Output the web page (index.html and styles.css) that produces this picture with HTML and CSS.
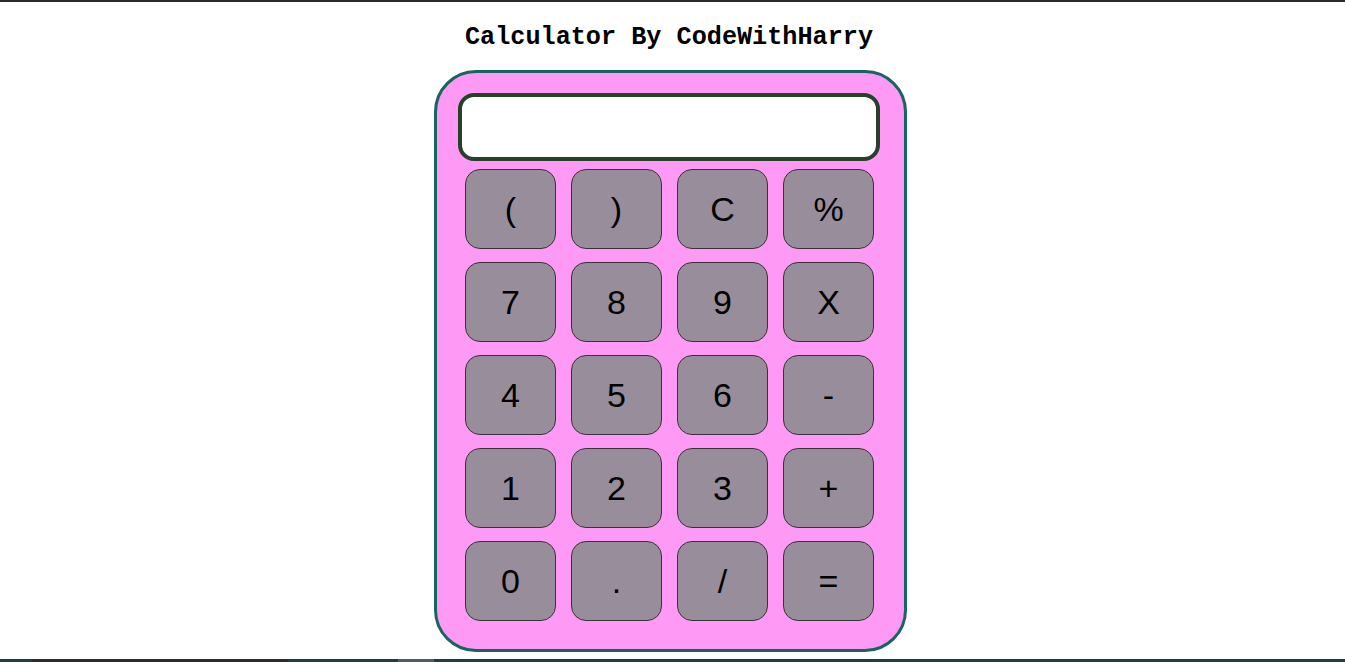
FILE: index.html
```html
<!DOCTYPE html>
<html>
<head>
<meta charset="utf-8">
<title>Calculator</title>
<link rel="stylesheet" href="styles.css">
</head>
<body>
<div class="topbar"></div>
<main class="page">
  <h1 class="title">Calculator By CodeWithHarry</h1>
  <div class="calc">
    <input class="display" type="text">
    <div class="keys">
      <button class="key">(</button>
      <button class="key">)</button>
      <button class="key">C</button>
      <button class="key">%</button>
      <button class="key">7</button>
      <button class="key">8</button>
      <button class="key">9</button>
      <button class="key">X</button>
      <button class="key">4</button>
      <button class="key">5</button>
      <button class="key">6</button>
      <button class="key">-</button>
      <button class="key">1</button>
      <button class="key">2</button>
      <button class="key">3</button>
      <button class="key">+</button>
      <button class="key">0</button>
      <button class="key">.</button>
      <button class="key">/</button>
      <button class="key">=</button>
    </div>
  </div>
</main>
<div class="bottombar">
  <span class="seg seg1"></span>
  <span class="seg seg2"></span>
  <span class="seg seg3"></span>
  <span class="seg seg4"></span>
</div>
</body>
</html>
```
FILE: styles.css
```css
html, body {
  margin: 0;
  padding: 0;
  height: 100%;
  overflow: hidden;
  background: #ffffff;
}
body {
  display: flex;
  flex-direction: column;
}
.topbar {
  height: 2px;
  background: #2b2b2b;
  flex: none;
}
.page {
  flex: 1;
  display: flex;
  flex-direction: column;
  align-items: center;
  padding-right: 5px;
}
.title {
  margin: 22px 2px 0 0;
  font-family: "Liberation Mono", "Courier New", monospace;
  font-weight: bold;
  font-size: 25.2px;
  line-height: 28px;
  color: #000;
}
.calc {
  margin-top: 18px;
  width: 467px;
  box-sizing: content-box;
  border: 3px solid #17655e;
  border-radius: 42px;
  background: #ff99f6;
  padding: 20px 0 28px 0;
  display: flex;
  flex-direction: column;
  align-items: center;
}
.display {
  box-sizing: border-box;
  width: 422px;
  height: 68px;
  border: 4px solid #254227;
  border-radius: 16px;
  background: #fff;
  margin: 0 0 8px -2px;
  padding: 0 10px;
  outline: none;
}
.keys {
  display: grid;
  grid-template-columns: repeat(4, 91px);
  grid-auto-rows: 80px;
  column-gap: 15px;
  row-gap: 13px;
  margin-left: -1px;
}
.key {
  box-sizing: border-box;
  border: 1px solid #3a3238;
  border-radius: 15px;
  background: #988e9b;
  font-family: "Liberation Sans", Arial, sans-serif;
  font-size: 34px;
  color: #000;
  padding: 0;
  line-height: 1;
}
.bottombar {
  height: 3px;
  flex: none;
  background: #213a44;
  display: flex;
}
.seg { display: block; height: 3px; }
.seg1 { width: 32px; }
.seg2 { width: 256px; background: #2c2c2c; }
.seg3 { width: 110px; }
.seg4 { width: 36px; background: #4a5e66; }
```
